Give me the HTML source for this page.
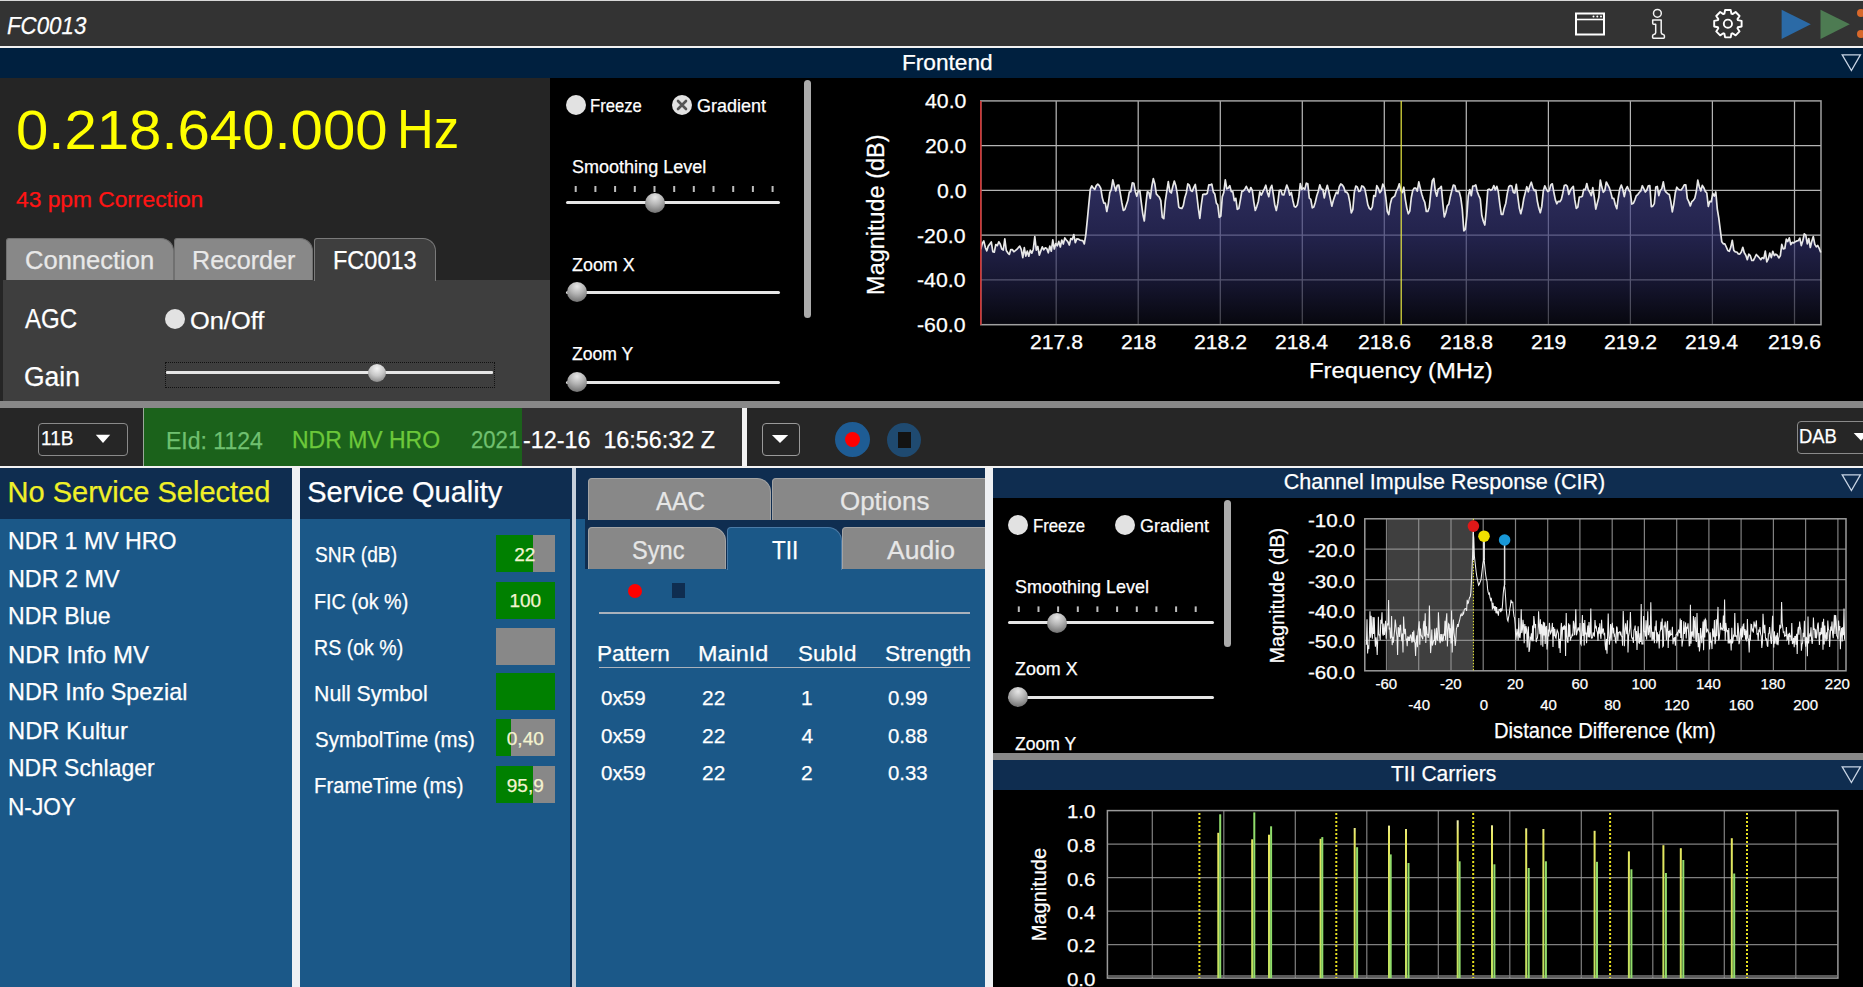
<!DOCTYPE html>
<html><head><meta charset="utf-8"><style>
html,body{margin:0;padding:0;width:1863px;height:987px;overflow:hidden;background:#262626;font-family:"Liberation Sans", sans-serif;}
div{box-sizing:border-box;}
svg{position:absolute;overflow:visible;}
.t{-webkit-text-stroke:0.25px currentColor;}
</style></head><body>
<div style="position:absolute;left:0px;top:0px;width:1863px;height:46px;background:#333333;"></div><div style="position:absolute;left:0px;top:0px;width:1863px;height:1px;background:#d8d8d8;"></div><div class="t" style="position:absolute;left:7.07px;top:13.51px;font-size:24px;line-height:24px;color:#fff;white-space:pre;font-style:italic;transform:scaleX(0.9286);transform-origin:0 0;">FC0013</div><svg style="left:0;top:0" width="1863" height="46">
<rect x="1576" y="13.5" width="28" height="21" fill="none" stroke="#fff" stroke-width="2"/>
<line x1="1576" y1="19.5" x2="1604" y2="19.5" stroke="#fff" stroke-width="1.6"/>
<circle cx="1593.5" cy="16.5" r="1" fill="#fff"/><circle cx="1597.3" cy="16.5" r="1" fill="#fff"/><circle cx="1601" cy="16.5" r="1" fill="#fff"/>
<circle cx="1657.4" cy="13.3" r="3.9" fill="none" stroke="#f4f4f4" stroke-width="1.5"/>
<path d="M1652.7 19.9 H1661.2 V32.6 Q1661.4 34.2 1663.2 34.4 Q1664.4 34.6 1664.4 35.8 V37.6 Q1664.4 38.3 1663.6 38.3 H1653.3 Q1652.6 38.3 1652.6 37.6 V35.8 Q1652.6 34.6 1653.8 34.4 Q1655.6 34.2 1655.7 32.6 V24.2 H1653.6 Q1652.7 24.2 1652.7 23.2 Z" fill="none" stroke="#f4f4f4" stroke-width="1.5" stroke-linejoin="round"/>
<path fill="none" stroke="#fff" stroke-width="1.9" stroke-linejoin="round" d="M1724.37 13.71 L1725.12 9.98 L1730.68 9.98 L1731.43 13.71 L1732.47 14.13 L1735.64 12.03 L1739.57 15.96 L1737.47 19.13 L1737.89 20.17 L1741.62 20.92 L1741.62 26.48 L1737.89 27.23 L1737.47 28.27 L1739.57 31.44 L1735.64 35.37 L1732.47 33.27 L1731.43 33.69 L1730.68 37.42 L1725.12 37.42 L1724.37 33.69 L1723.33 33.27 L1720.16 35.37 L1716.23 31.44 L1718.33 28.27 L1717.91 27.23 L1714.18 26.48 L1714.18 20.92 L1717.91 20.17 L1718.33 19.13 L1716.23 15.96 L1720.16 12.03 L1723.33 14.13 Z"/>
<circle cx="1727.9" cy="23.7" r="4.1" fill="none" stroke="#fff" stroke-width="1.9"/>
<polygon points="1781.6,9.7 1810.8,24.3 1781.6,39" fill="#2b6aa6"/>
<polygon points="1820.5,9.7 1849.8,24.3 1820.5,39" fill="#4d7b52"/>
<circle cx="1861" cy="13" r="4" fill="#d9682a"/><circle cx="1861" cy="34" r="4" fill="#d9682a"/>
</svg><div style="position:absolute;left:0px;top:46px;width:1863px;height:2px;background:#f2f2f2;"></div><div style="position:absolute;left:0px;top:48px;width:1863px;height:30px;background:#00203f;"></div><div class="t" style="position:absolute;left:901.90px;top:50.66px;font-size:22.7px;line-height:22.7px;color:#fff;white-space:pre;">Frontend</div><svg style="left:0;top:0" width="1863" height="80"><polygon points="1842.2,54.9 1860.4,54.9 1851.4,70.5" fill="none" stroke="#c8d4e4" stroke-width="1.3"/></svg><div style="position:absolute;left:0px;top:78px;width:550px;height:323px;background:#252525;"></div><div class="n" style="position:absolute;left:16.29px;top:102.51px;font-size:55px;line-height:55px;color:#ffff00;white-space:pre;transform:scaleX(1.0563);transform-origin:0 0;">0.218.640.000</div><div class="n" style="position:absolute;left:397.30px;top:101.51px;font-size:55px;line-height:55px;color:#ffff00;white-space:pre;transform:scaleX(0.9246);transform-origin:0 0;">Hz</div><div class="t" style="position:absolute;left:15.80px;top:188.66px;font-size:21.7px;line-height:21.7px;color:#ff1414;white-space:pre;transform:scaleX(1.0497);transform-origin:0 0;">43 ppm Correction</div><div style="position:absolute;left:3px;top:280px;width:547px;height:121px;background:#3e3e3e;"></div><div style="position:absolute;left:6px;top:238px;width:168px;height:42px;background:#888;border:1px solid #707070;border-bottom:none;border-radius:3px 13px 0 0;"></div><div style="position:absolute;left:174px;top:238px;width:139px;height:42px;background:#888;border:1px solid #707070;border-bottom:none;border-radius:3px 13px 0 0;"></div><div style="position:absolute;left:314px;top:238px;width:122px;height:43px;background:#3e3e3e;border:1px solid #7a7a7a;border-bottom:none;border-radius:3px 13px 0 0;"></div><div class="t" style="position:absolute;left:25.31px;top:248.16px;font-size:25.7px;line-height:25.7px;color:#e8e8e8;white-space:pre;transform:scaleX(0.9938);transform-origin:0 0;">Connection</div><div class="t" style="position:absolute;left:191.84px;top:248.16px;font-size:25.7px;line-height:25.7px;color:#e8e8e8;white-space:pre;transform:scaleX(0.9777);transform-origin:0 0;">Recorder</div><div class="t" style="position:absolute;left:332.87px;top:248.16px;font-size:25.7px;line-height:25.7px;color:#fff;white-space:pre;transform:scaleX(0.9148);transform-origin:0 0;">FC0013</div><div class="t" style="position:absolute;left:24.70px;top:304.81px;font-size:27.4px;line-height:27.4px;color:#fff;white-space:pre;transform:scaleX(0.8776);transform-origin:0 0;">AGC</div><div style="position:absolute;left:165px;top:308.5px;width:20px;height:20px;border-radius:50%;background:#e2e2e2;"></div><div class="t" style="position:absolute;left:190.37px;top:309.21px;font-size:24.6px;line-height:24.6px;color:#fff;white-space:pre;transform:scaleX(1.0324);transform-origin:0 0;">On/Off</div><div class="t" style="position:absolute;left:23.72px;top:363.51px;font-size:27px;line-height:27px;color:#fff;white-space:pre;transform:scaleX(0.9815);transform-origin:0 0;">Gain</div><div style="position:absolute;left:165px;top:362px;width:330px;height:26px;border:1.3px dotted #111;"></div><div style="position:absolute;left:166px;top:371px;width:327px;height:3px;background:#e6e6e6;border-radius:1px;"></div><div style="position:absolute;left:368px;top:363.5px;width:18px;height:18px;border-radius:50%;background:radial-gradient(circle at 50% 25%,#f4f4f4 0%,#c8c8c8 45%,#707070 100%);"></div><div style="position:absolute;left:550px;top:78px;width:270px;height:323px;background:#000;"></div><div style="position:absolute;left:565.6px;top:95.0px;width:20px;height:20px;border-radius:50%;background:#e2e2e2;"></div><div class="t" style="position:absolute;left:590.32px;top:96.01px;font-size:19px;line-height:19px;color:#fff;white-space:pre;transform:scaleX(0.8759);transform-origin:0 0;">Freeze</div><div style="position:absolute;left:672.0px;top:95.0px;width:20px;height:20px;border-radius:50%;background:#e2e2e2;"></div><svg style="left:0;top:0" width="1" height="1"><path d="M678 101 L686 109 M686 101 L678 109" stroke="#555" stroke-width="2.6" stroke-linecap="round"/></svg><div class="t" style="position:absolute;left:697.35px;top:96.01px;font-size:19px;line-height:19px;color:#fff;white-space:pre;transform:scaleX(0.9472);transform-origin:0 0;">Gradient</div><div class="t" style="position:absolute;left:572.43px;top:158.26px;font-size:18.5px;line-height:18.5px;color:#fff;white-space:pre;transform:scaleX(0.9743);transform-origin:0 0;">Smoothing Level</div><div style="position:absolute;left:566px;top:201.0px;width:214px;height:3px;background:#e6e6e6;border-radius:1.5px;"></div><svg style="left:0;top:0" width="1" height="1"><rect x="574.7" y="186" width="2" height="6" fill="#bdbdbd"/><rect x="594.4" y="186" width="2" height="6" fill="#bdbdbd"/><rect x="614.1" y="186" width="2" height="6" fill="#bdbdbd"/><rect x="633.8" y="186" width="2" height="6" fill="#bdbdbd"/><rect x="653.5" y="186" width="2" height="6" fill="#bdbdbd"/><rect x="673.2" y="186" width="2" height="6" fill="#bdbdbd"/><rect x="692.8" y="186" width="2" height="6" fill="#bdbdbd"/><rect x="712.5" y="186" width="2" height="6" fill="#bdbdbd"/><rect x="732.2" y="186" width="2" height="6" fill="#bdbdbd"/><rect x="751.9" y="186" width="2" height="6" fill="#bdbdbd"/><rect x="771.6" y="186" width="2" height="6" fill="#bdbdbd"/></svg><div style="position:absolute;left:644.5px;top:192.5px;width:20px;height:20px;border-radius:50%;background:radial-gradient(circle at 50% 22%,#e6e6e6 0%,#b4b4b4 40%,#5a5a5a 100%);"></div><div class="t" style="position:absolute;left:572.00px;top:256.26px;font-size:18.5px;line-height:18.5px;color:#fff;white-space:pre;transform:scaleX(0.9672);transform-origin:0 0;">Zoom X</div><div style="position:absolute;left:566px;top:290.8px;width:214px;height:3px;background:#e6e6e6;border-radius:1.5px;"></div><div style="position:absolute;left:566.5px;top:282.3px;width:20px;height:20px;border-radius:50%;background:radial-gradient(circle at 50% 22%,#e6e6e6 0%,#b4b4b4 40%,#5a5a5a 100%);"></div><div class="t" style="position:absolute;left:572.00px;top:345.26px;font-size:18.5px;line-height:18.5px;color:#fff;white-space:pre;transform:scaleX(0.9500);transform-origin:0 0;">Zoom Y</div><div style="position:absolute;left:566px;top:380.8px;width:214px;height:3px;background:#e6e6e6;border-radius:1.5px;"></div><div style="position:absolute;left:566.5px;top:372.3px;width:20px;height:20px;border-radius:50%;background:radial-gradient(circle at 50% 22%,#e6e6e6 0%,#b4b4b4 40%,#5a5a5a 100%);"></div><div style="position:absolute;left:804px;top:80px;width:7.3px;height:238px;background:#ababab;border-radius:4px;"></div><div style="position:absolute;left:820px;top:78px;width:1043px;height:323px;background:#000;"></div><svg style="left:0;top:0" width="1863" height="400">
<defs><linearGradient id="sg" x1="0" y1="179.2" x2="0" y2="324.7" gradientUnits="userSpaceOnUse"><stop offset="0" stop-color="#46468e"/><stop offset="0.4" stop-color="#343472"/><stop offset="0.7" stop-color="#22224a"/><stop offset="1" stop-color="#0b0b16"/></linearGradient></defs>
<line x1="1056.2" y1="100.9" x2="1056.2" y2="324.7" stroke="#b4b4b4" stroke-width="1.25"/><line x1="1138.2" y1="100.9" x2="1138.2" y2="324.7" stroke="#b4b4b4" stroke-width="1.25"/><line x1="1220.3" y1="100.9" x2="1220.3" y2="324.7" stroke="#b4b4b4" stroke-width="1.25"/><line x1="1302.3" y1="100.9" x2="1302.3" y2="324.7" stroke="#b4b4b4" stroke-width="1.25"/><line x1="1384.3" y1="100.9" x2="1384.3" y2="324.7" stroke="#b4b4b4" stroke-width="1.25"/><line x1="1466.3" y1="100.9" x2="1466.3" y2="324.7" stroke="#b4b4b4" stroke-width="1.25"/><line x1="1548.4" y1="100.9" x2="1548.4" y2="324.7" stroke="#b4b4b4" stroke-width="1.25"/><line x1="1630.4" y1="100.9" x2="1630.4" y2="324.7" stroke="#b4b4b4" stroke-width="1.25"/><line x1="1712.4" y1="100.9" x2="1712.4" y2="324.7" stroke="#b4b4b4" stroke-width="1.25"/><line x1="1794.5" y1="100.9" x2="1794.5" y2="324.7" stroke="#b4b4b4" stroke-width="1.25"/><line x1="980.8" y1="145.7" x2="1821" y2="145.7" stroke="#b4b4b4" stroke-width="1.25"/><line x1="980.8" y1="190.4" x2="1821" y2="190.4" stroke="#b4b4b4" stroke-width="1.25"/><line x1="980.8" y1="235.2" x2="1821" y2="235.2" stroke="#b4b4b4" stroke-width="1.25"/><line x1="980.8" y1="279.9" x2="1821" y2="279.9" stroke="#b4b4b4" stroke-width="1.25"/>
<polygon points="980.8,324.7 980.8,249.4 982.3,243.2 983.8,240.9 985.3,247.3 986.8,250.8 988.3,246.0 989.8,244.1 991.3,241.9 992.8,251.6 994.3,252.2 995.8,244.5 997.3,245.7 998.8,241.8 1000.3,244.3 1001.8,249.0 1003.3,250.0 1004.8,238.8 1006.3,250.5 1007.8,252.8 1009.3,254.4 1010.8,249.6 1012.3,249.6 1013.8,251.7 1015.3,250.6 1016.8,249.4 1018.3,247.7 1019.8,246.1 1021.3,249.7 1022.8,257.7 1024.3,247.6 1025.8,256.1 1027.3,251.0 1028.8,256.2 1030.3,250.2 1031.8,253.2 1033.3,249.2 1034.8,236.7 1036.3,250.1 1037.8,246.5 1039.3,255.1 1040.8,250.9 1042.3,246.9 1043.8,249.8 1045.3,247.8 1046.8,248.6 1048.3,252.8 1049.8,246.1 1051.3,251.2 1052.8,239.9 1054.3,249.0 1055.8,243.6 1057.3,245.8 1058.8,241.4 1060.3,247.0 1061.8,240.0 1063.3,244.0 1064.8,237.9 1066.3,240.0 1067.8,241.6 1069.3,245.0 1070.8,238.5 1072.3,239.5 1073.8,234.6 1075.3,242.7 1076.8,238.9 1078.3,239.1 1079.8,240.0 1081.3,240.4 1082.8,240.6 1084.3,243.9 1085.8,234.8 1087.3,220.0 1088.8,204.3 1090.3,189.3 1091.8,185.9 1093.3,188.1 1094.8,189.4 1096.3,185.6 1097.8,184.1 1099.3,185.6 1100.8,188.4 1102.3,197.8 1103.8,203.1 1105.3,203.2 1106.8,211.5 1108.3,203.8 1109.8,192.6 1111.3,189.6 1112.8,179.8 1114.3,185.8 1115.8,190.9 1117.3,185.3 1118.8,185.0 1120.3,193.4 1121.8,202.5 1123.3,210.4 1124.8,209.6 1126.3,205.1 1127.8,200.6 1129.3,192.1 1130.8,191.6 1132.3,182.8 1133.8,183.2 1135.3,191.4 1136.8,196.3 1138.3,191.1 1139.8,190.4 1141.3,202.6 1142.8,214.1 1144.3,221.0 1145.8,204.9 1147.3,191.8 1148.8,192.2 1150.3,198.5 1151.8,186.4 1153.3,178.6 1154.8,183.7 1156.3,193.9 1157.8,195.6 1159.3,197.1 1160.8,200.7 1162.3,217.3 1163.8,218.6 1165.3,201.2 1166.8,191.4 1168.3,181.6 1169.8,191.6 1171.3,193.0 1172.8,186.5 1174.3,181.1 1175.8,185.7 1177.3,194.1 1178.8,207.1 1180.3,208.2 1181.8,208.5 1183.3,205.7 1184.8,197.7 1186.3,193.0 1187.8,183.8 1189.3,185.2 1190.8,190.6 1192.3,191.4 1193.8,187.4 1195.3,184.4 1196.8,195.1 1198.3,208.0 1199.8,218.5 1201.3,204.8 1202.8,194.5 1204.3,194.1 1205.8,194.3 1207.3,193.2 1208.8,184.9 1210.3,184.9 1211.8,184.1 1213.3,191.9 1214.8,194.1 1216.3,202.9 1217.8,205.1 1219.3,217.4 1220.8,216.2 1222.3,196.6 1223.8,192.5 1225.3,179.8 1226.8,188.8 1228.3,188.0 1229.8,185.7 1231.3,191.6 1232.8,191.7 1234.3,200.7 1235.8,198.3 1237.3,209.3 1238.8,208.6 1240.3,200.4 1241.8,191.6 1243.3,190.9 1244.8,189.2 1246.3,186.3 1247.8,189.5 1249.3,192.0 1250.8,187.5 1252.3,190.3 1253.8,201.8 1255.3,210.5 1256.8,206.6 1258.3,201.5 1259.8,191.8 1261.3,195.1 1262.8,191.8 1264.3,188.9 1265.8,185.2 1267.3,192.3 1268.8,196.7 1270.3,188.3 1271.8,185.3 1273.3,194.4 1274.8,204.9 1276.3,210.5 1277.8,203.2 1279.3,190.6 1280.8,190.1 1282.3,194.7 1283.8,195.0 1285.3,190.0 1286.8,185.0 1288.3,189.0 1289.8,195.2 1291.3,192.4 1292.8,200.2 1294.3,206.5 1295.8,207.1 1297.3,205.1 1298.8,196.9 1300.3,183.6 1301.8,189.5 1303.3,188.0 1304.8,189.4 1306.3,183.2 1307.8,183.8 1309.3,198.1 1310.8,199.3 1312.3,207.8 1313.8,206.9 1315.3,202.3 1316.8,195.8 1318.3,191.2 1319.8,184.9 1321.3,189.1 1322.8,189.3 1324.3,197.9 1325.8,190.6 1327.3,185.3 1328.8,191.5 1330.3,198.7 1331.8,206.2 1333.3,200.5 1334.8,196.1 1336.3,192.2 1337.8,193.7 1339.3,186.6 1340.8,184.0 1342.3,185.0 1343.8,187.3 1345.3,191.9 1346.8,192.2 1348.3,194.5 1349.8,202.2 1351.3,213.0 1352.8,209.7 1354.3,192.4 1355.8,186.1 1357.3,186.9 1358.8,191.5 1360.3,190.9 1361.8,185.9 1363.3,186.6 1364.8,188.8 1366.3,196.1 1367.8,204.7 1369.3,208.3 1370.8,209.6 1372.3,206.9 1373.8,195.5 1375.3,196.3 1376.8,185.7 1378.3,188.3 1379.8,192.6 1381.3,190.8 1382.8,184.1 1384.3,187.2 1385.8,197.4 1387.3,211.6 1388.8,214.5 1390.3,204.0 1391.8,198.3 1393.3,197.1 1394.8,196.0 1396.3,191.2 1397.8,188.4 1399.3,183.8 1400.8,190.3 1402.3,192.6 1403.8,187.2 1405.3,199.1 1406.8,208.1 1408.3,213.8 1409.8,211.1 1411.3,197.5 1412.8,190.4 1414.3,188.0 1415.8,188.2 1417.3,191.2 1418.8,181.9 1420.3,188.3 1421.8,194.2 1423.3,199.0 1424.8,202.4 1426.3,211.5 1427.8,211.5 1429.3,207.2 1430.8,192.7 1432.3,180.7 1433.8,178.5 1435.3,191.1 1436.8,196.2 1438.3,188.9 1439.8,188.2 1441.3,186.3 1442.8,202.8 1444.3,216.9 1445.8,212.7 1447.3,205.8 1448.8,204.2 1450.3,196.7 1451.8,190.6 1453.3,185.1 1454.8,185.5 1456.3,191.2 1457.8,191.5 1459.3,192.0 1460.8,197.9 1462.3,209.4 1463.8,230.8 1465.3,229.4 1466.8,216.0 1468.3,196.0 1469.8,189.5 1471.3,195.7 1472.8,186.1 1474.3,186.0 1475.8,185.0 1477.3,191.8 1478.8,195.6 1480.3,199.0 1481.8,215.3 1483.3,221.3 1484.8,225.0 1486.3,209.6 1487.8,189.7 1489.3,189.1 1490.8,190.3 1492.3,189.3 1493.8,185.6 1495.3,189.9 1496.8,186.3 1498.3,191.7 1499.8,204.1 1501.3,214.4 1502.8,214.5 1504.3,207.9 1505.8,203.2 1507.3,193.4 1508.8,186.7 1510.3,185.5 1511.8,186.1 1513.3,192.4 1514.8,193.0 1516.3,184.3 1517.8,196.7 1519.3,208.0 1520.8,213.7 1522.3,207.6 1523.8,198.5 1525.3,192.6 1526.8,186.7 1528.3,191.8 1529.8,186.0 1531.3,182.2 1532.8,187.6 1534.3,190.6 1535.8,190.1 1537.3,201.0 1538.8,208.1 1540.3,212.7 1541.8,206.2 1543.3,191.1 1544.8,185.8 1546.3,189.1 1547.8,191.6 1549.3,190.5 1550.8,184.9 1552.3,183.8 1553.8,192.1 1555.3,199.6 1556.8,203.8 1558.3,201.3 1559.8,201.7 1561.3,199.6 1562.8,193.2 1564.3,185.6 1565.8,184.9 1567.3,186.4 1568.8,194.5 1570.3,190.4 1571.8,188.0 1573.3,186.4 1574.8,199.9 1576.3,208.4 1577.8,207.2 1579.3,197.0 1580.8,197.0 1582.3,196.2 1583.8,189.3 1585.3,189.6 1586.8,183.5 1588.3,189.9 1589.8,192.2 1591.3,195.6 1592.8,187.7 1594.3,197.4 1595.8,209.1 1597.3,203.1 1598.8,197.3 1600.3,180.0 1601.8,187.1 1603.3,192.3 1604.8,190.5 1606.3,182.0 1607.8,184.9 1609.3,187.7 1610.8,192.4 1612.3,198.5 1613.8,198.4 1615.3,204.8 1616.8,208.6 1618.3,197.5 1619.8,188.9 1621.3,185.1 1622.8,189.6 1624.3,196.6 1625.8,189.4 1627.3,186.6 1628.8,190.1 1630.3,192.0 1631.8,204.1 1633.3,203.3 1634.8,200.1 1636.3,195.7 1637.8,194.6 1639.3,192.5 1640.8,190.9 1642.3,185.7 1643.8,188.6 1645.3,192.0 1646.8,190.1 1648.3,185.8 1649.8,185.5 1651.3,206.7 1652.8,206.1 1654.3,203.6 1655.8,187.1 1657.3,186.5 1658.8,195.6 1660.3,190.5 1661.8,188.8 1663.3,181.9 1664.8,190.3 1666.3,192.4 1667.8,193.7 1669.3,194.5 1670.8,201.7 1672.3,211.8 1673.8,204.0 1675.3,192.8 1676.8,187.2 1678.3,189.2 1679.8,190.0 1681.3,189.8 1682.8,187.7 1684.3,184.8 1685.8,184.9 1687.3,198.7 1688.8,201.6 1690.3,205.9 1691.8,201.6 1693.3,200.4 1694.8,198.1 1696.3,191.5 1697.8,180.2 1699.3,186.7 1700.8,191.0 1702.3,185.4 1703.8,187.7 1705.3,191.4 1706.8,193.0 1708.3,206.5 1709.8,201.3 1711.3,201.7 1712.8,193.4 1714.3,196.0 1715.8,192.0 1717.3,209.1 1718.8,218.2 1720.3,230.1 1721.8,241.8 1723.3,243.8 1724.8,243.9 1726.3,247.0 1727.8,250.5 1729.3,251.3 1730.8,247.1 1732.3,240.3 1733.8,250.3 1735.3,251.8 1736.8,252.0 1738.3,253.9 1739.8,254.1 1741.3,252.1 1742.8,247.3 1744.3,252.8 1745.8,255.2 1747.3,259.7 1748.8,254.2 1750.3,255.7 1751.8,260.4 1753.3,260.5 1754.8,257.6 1756.3,254.5 1757.8,256.1 1759.3,257.8 1760.8,259.7 1762.3,257.6 1763.8,258.6 1765.3,251.1 1766.8,261.9 1768.3,258.9 1769.8,253.0 1771.3,257.6 1772.8,251.3 1774.3,255.5 1775.8,254.2 1777.3,255.2 1778.8,257.9 1780.3,255.8 1781.8,244.4 1783.3,249.0 1784.8,248.5 1786.3,239.1 1787.8,241.5 1789.3,237.9 1790.8,244.6 1792.3,242.4 1793.8,242.9 1795.3,241.7 1796.8,240.9 1798.3,240.7 1799.8,238.1 1801.3,245.6 1802.8,240.8 1804.3,233.8 1805.8,235.1 1807.3,243.8 1808.8,238.6 1810.3,247.5 1811.8,241.3 1813.3,236.6 1814.8,244.4 1816.3,246.8 1817.8,245.5 1819.3,248.6 1820.8,252.5 1821,324.7" fill="url(#sg)" fill-opacity="0.66"/>
<rect x="980.8" y="100.9" width="840.2" height="223.79999999999998" fill="none" stroke="#a0a0a0" stroke-width="1.5"/>
<polyline points="980.8,249.4 982.3,243.2 983.8,240.9 985.3,247.3 986.8,250.8 988.3,246.0 989.8,244.1 991.3,241.9 992.8,251.6 994.3,252.2 995.8,244.5 997.3,245.7 998.8,241.8 1000.3,244.3 1001.8,249.0 1003.3,250.0 1004.8,238.8 1006.3,250.5 1007.8,252.8 1009.3,254.4 1010.8,249.6 1012.3,249.6 1013.8,251.7 1015.3,250.6 1016.8,249.4 1018.3,247.7 1019.8,246.1 1021.3,249.7 1022.8,257.7 1024.3,247.6 1025.8,256.1 1027.3,251.0 1028.8,256.2 1030.3,250.2 1031.8,253.2 1033.3,249.2 1034.8,236.7 1036.3,250.1 1037.8,246.5 1039.3,255.1 1040.8,250.9 1042.3,246.9 1043.8,249.8 1045.3,247.8 1046.8,248.6 1048.3,252.8 1049.8,246.1 1051.3,251.2 1052.8,239.9 1054.3,249.0 1055.8,243.6 1057.3,245.8 1058.8,241.4 1060.3,247.0 1061.8,240.0 1063.3,244.0 1064.8,237.9 1066.3,240.0 1067.8,241.6 1069.3,245.0 1070.8,238.5 1072.3,239.5 1073.8,234.6 1075.3,242.7 1076.8,238.9 1078.3,239.1 1079.8,240.0 1081.3,240.4 1082.8,240.6 1084.3,243.9 1085.8,234.8 1087.3,220.0 1088.8,204.3 1090.3,189.3 1091.8,185.9 1093.3,188.1 1094.8,189.4 1096.3,185.6 1097.8,184.1 1099.3,185.6 1100.8,188.4 1102.3,197.8 1103.8,203.1 1105.3,203.2 1106.8,211.5 1108.3,203.8 1109.8,192.6 1111.3,189.6 1112.8,179.8 1114.3,185.8 1115.8,190.9 1117.3,185.3 1118.8,185.0 1120.3,193.4 1121.8,202.5 1123.3,210.4 1124.8,209.6 1126.3,205.1 1127.8,200.6 1129.3,192.1 1130.8,191.6 1132.3,182.8 1133.8,183.2 1135.3,191.4 1136.8,196.3 1138.3,191.1 1139.8,190.4 1141.3,202.6 1142.8,214.1 1144.3,221.0 1145.8,204.9 1147.3,191.8 1148.8,192.2 1150.3,198.5 1151.8,186.4 1153.3,178.6 1154.8,183.7 1156.3,193.9 1157.8,195.6 1159.3,197.1 1160.8,200.7 1162.3,217.3 1163.8,218.6 1165.3,201.2 1166.8,191.4 1168.3,181.6 1169.8,191.6 1171.3,193.0 1172.8,186.5 1174.3,181.1 1175.8,185.7 1177.3,194.1 1178.8,207.1 1180.3,208.2 1181.8,208.5 1183.3,205.7 1184.8,197.7 1186.3,193.0 1187.8,183.8 1189.3,185.2 1190.8,190.6 1192.3,191.4 1193.8,187.4 1195.3,184.4 1196.8,195.1 1198.3,208.0 1199.8,218.5 1201.3,204.8 1202.8,194.5 1204.3,194.1 1205.8,194.3 1207.3,193.2 1208.8,184.9 1210.3,184.9 1211.8,184.1 1213.3,191.9 1214.8,194.1 1216.3,202.9 1217.8,205.1 1219.3,217.4 1220.8,216.2 1222.3,196.6 1223.8,192.5 1225.3,179.8 1226.8,188.8 1228.3,188.0 1229.8,185.7 1231.3,191.6 1232.8,191.7 1234.3,200.7 1235.8,198.3 1237.3,209.3 1238.8,208.6 1240.3,200.4 1241.8,191.6 1243.3,190.9 1244.8,189.2 1246.3,186.3 1247.8,189.5 1249.3,192.0 1250.8,187.5 1252.3,190.3 1253.8,201.8 1255.3,210.5 1256.8,206.6 1258.3,201.5 1259.8,191.8 1261.3,195.1 1262.8,191.8 1264.3,188.9 1265.8,185.2 1267.3,192.3 1268.8,196.7 1270.3,188.3 1271.8,185.3 1273.3,194.4 1274.8,204.9 1276.3,210.5 1277.8,203.2 1279.3,190.6 1280.8,190.1 1282.3,194.7 1283.8,195.0 1285.3,190.0 1286.8,185.0 1288.3,189.0 1289.8,195.2 1291.3,192.4 1292.8,200.2 1294.3,206.5 1295.8,207.1 1297.3,205.1 1298.8,196.9 1300.3,183.6 1301.8,189.5 1303.3,188.0 1304.8,189.4 1306.3,183.2 1307.8,183.8 1309.3,198.1 1310.8,199.3 1312.3,207.8 1313.8,206.9 1315.3,202.3 1316.8,195.8 1318.3,191.2 1319.8,184.9 1321.3,189.1 1322.8,189.3 1324.3,197.9 1325.8,190.6 1327.3,185.3 1328.8,191.5 1330.3,198.7 1331.8,206.2 1333.3,200.5 1334.8,196.1 1336.3,192.2 1337.8,193.7 1339.3,186.6 1340.8,184.0 1342.3,185.0 1343.8,187.3 1345.3,191.9 1346.8,192.2 1348.3,194.5 1349.8,202.2 1351.3,213.0 1352.8,209.7 1354.3,192.4 1355.8,186.1 1357.3,186.9 1358.8,191.5 1360.3,190.9 1361.8,185.9 1363.3,186.6 1364.8,188.8 1366.3,196.1 1367.8,204.7 1369.3,208.3 1370.8,209.6 1372.3,206.9 1373.8,195.5 1375.3,196.3 1376.8,185.7 1378.3,188.3 1379.8,192.6 1381.3,190.8 1382.8,184.1 1384.3,187.2 1385.8,197.4 1387.3,211.6 1388.8,214.5 1390.3,204.0 1391.8,198.3 1393.3,197.1 1394.8,196.0 1396.3,191.2 1397.8,188.4 1399.3,183.8 1400.8,190.3 1402.3,192.6 1403.8,187.2 1405.3,199.1 1406.8,208.1 1408.3,213.8 1409.8,211.1 1411.3,197.5 1412.8,190.4 1414.3,188.0 1415.8,188.2 1417.3,191.2 1418.8,181.9 1420.3,188.3 1421.8,194.2 1423.3,199.0 1424.8,202.4 1426.3,211.5 1427.8,211.5 1429.3,207.2 1430.8,192.7 1432.3,180.7 1433.8,178.5 1435.3,191.1 1436.8,196.2 1438.3,188.9 1439.8,188.2 1441.3,186.3 1442.8,202.8 1444.3,216.9 1445.8,212.7 1447.3,205.8 1448.8,204.2 1450.3,196.7 1451.8,190.6 1453.3,185.1 1454.8,185.5 1456.3,191.2 1457.8,191.5 1459.3,192.0 1460.8,197.9 1462.3,209.4 1463.8,230.8 1465.3,229.4 1466.8,216.0 1468.3,196.0 1469.8,189.5 1471.3,195.7 1472.8,186.1 1474.3,186.0 1475.8,185.0 1477.3,191.8 1478.8,195.6 1480.3,199.0 1481.8,215.3 1483.3,221.3 1484.8,225.0 1486.3,209.6 1487.8,189.7 1489.3,189.1 1490.8,190.3 1492.3,189.3 1493.8,185.6 1495.3,189.9 1496.8,186.3 1498.3,191.7 1499.8,204.1 1501.3,214.4 1502.8,214.5 1504.3,207.9 1505.8,203.2 1507.3,193.4 1508.8,186.7 1510.3,185.5 1511.8,186.1 1513.3,192.4 1514.8,193.0 1516.3,184.3 1517.8,196.7 1519.3,208.0 1520.8,213.7 1522.3,207.6 1523.8,198.5 1525.3,192.6 1526.8,186.7 1528.3,191.8 1529.8,186.0 1531.3,182.2 1532.8,187.6 1534.3,190.6 1535.8,190.1 1537.3,201.0 1538.8,208.1 1540.3,212.7 1541.8,206.2 1543.3,191.1 1544.8,185.8 1546.3,189.1 1547.8,191.6 1549.3,190.5 1550.8,184.9 1552.3,183.8 1553.8,192.1 1555.3,199.6 1556.8,203.8 1558.3,201.3 1559.8,201.7 1561.3,199.6 1562.8,193.2 1564.3,185.6 1565.8,184.9 1567.3,186.4 1568.8,194.5 1570.3,190.4 1571.8,188.0 1573.3,186.4 1574.8,199.9 1576.3,208.4 1577.8,207.2 1579.3,197.0 1580.8,197.0 1582.3,196.2 1583.8,189.3 1585.3,189.6 1586.8,183.5 1588.3,189.9 1589.8,192.2 1591.3,195.6 1592.8,187.7 1594.3,197.4 1595.8,209.1 1597.3,203.1 1598.8,197.3 1600.3,180.0 1601.8,187.1 1603.3,192.3 1604.8,190.5 1606.3,182.0 1607.8,184.9 1609.3,187.7 1610.8,192.4 1612.3,198.5 1613.8,198.4 1615.3,204.8 1616.8,208.6 1618.3,197.5 1619.8,188.9 1621.3,185.1 1622.8,189.6 1624.3,196.6 1625.8,189.4 1627.3,186.6 1628.8,190.1 1630.3,192.0 1631.8,204.1 1633.3,203.3 1634.8,200.1 1636.3,195.7 1637.8,194.6 1639.3,192.5 1640.8,190.9 1642.3,185.7 1643.8,188.6 1645.3,192.0 1646.8,190.1 1648.3,185.8 1649.8,185.5 1651.3,206.7 1652.8,206.1 1654.3,203.6 1655.8,187.1 1657.3,186.5 1658.8,195.6 1660.3,190.5 1661.8,188.8 1663.3,181.9 1664.8,190.3 1666.3,192.4 1667.8,193.7 1669.3,194.5 1670.8,201.7 1672.3,211.8 1673.8,204.0 1675.3,192.8 1676.8,187.2 1678.3,189.2 1679.8,190.0 1681.3,189.8 1682.8,187.7 1684.3,184.8 1685.8,184.9 1687.3,198.7 1688.8,201.6 1690.3,205.9 1691.8,201.6 1693.3,200.4 1694.8,198.1 1696.3,191.5 1697.8,180.2 1699.3,186.7 1700.8,191.0 1702.3,185.4 1703.8,187.7 1705.3,191.4 1706.8,193.0 1708.3,206.5 1709.8,201.3 1711.3,201.7 1712.8,193.4 1714.3,196.0 1715.8,192.0 1717.3,209.1 1718.8,218.2 1720.3,230.1 1721.8,241.8 1723.3,243.8 1724.8,243.9 1726.3,247.0 1727.8,250.5 1729.3,251.3 1730.8,247.1 1732.3,240.3 1733.8,250.3 1735.3,251.8 1736.8,252.0 1738.3,253.9 1739.8,254.1 1741.3,252.1 1742.8,247.3 1744.3,252.8 1745.8,255.2 1747.3,259.7 1748.8,254.2 1750.3,255.7 1751.8,260.4 1753.3,260.5 1754.8,257.6 1756.3,254.5 1757.8,256.1 1759.3,257.8 1760.8,259.7 1762.3,257.6 1763.8,258.6 1765.3,251.1 1766.8,261.9 1768.3,258.9 1769.8,253.0 1771.3,257.6 1772.8,251.3 1774.3,255.5 1775.8,254.2 1777.3,255.2 1778.8,257.9 1780.3,255.8 1781.8,244.4 1783.3,249.0 1784.8,248.5 1786.3,239.1 1787.8,241.5 1789.3,237.9 1790.8,244.6 1792.3,242.4 1793.8,242.9 1795.3,241.7 1796.8,240.9 1798.3,240.7 1799.8,238.1 1801.3,245.6 1802.8,240.8 1804.3,233.8 1805.8,235.1 1807.3,243.8 1808.8,238.6 1810.3,247.5 1811.8,241.3 1813.3,236.6 1814.8,244.4 1816.3,246.8 1817.8,245.5 1819.3,248.6 1820.8,252.5" fill="none" stroke="#e8e8e8" stroke-width="1.7" stroke-linejoin="round"/>
<line x1="980.8" y1="100.9" x2="980.8" y2="324.7" stroke="#d03030" stroke-width="1.5"/>
<line x1="1401.2" y1="100.9" x2="1401.2" y2="324.7" stroke="#e8e840" stroke-width="1.2"/>
</svg><div class="t" style="position:absolute;left:924.87px;top:92.26px;font-size:19.5px;line-height:19.5px;color:#fff;white-space:pre;transform:scaleX(1.0900);transform-origin:0 0;">40.0</div><div class="t" style="position:absolute;left:924.87px;top:137.26px;font-size:19.5px;line-height:19.5px;color:#fff;white-space:pre;transform:scaleX(1.0900);transform-origin:0 0;">20.0</div><div class="t" style="position:absolute;left:936.86px;top:182.26px;font-size:19.5px;line-height:19.5px;color:#fff;white-space:pre;transform:scaleX(1.0900);transform-origin:0 0;">0.0</div><div class="t" style="position:absolute;left:917.24px;top:227.26px;font-size:19.5px;line-height:19.5px;color:#fff;white-space:pre;transform:scaleX(1.0900);transform-origin:0 0;">-20.0</div><div class="t" style="position:absolute;left:917.24px;top:271.26px;font-size:19.5px;line-height:19.5px;color:#fff;white-space:pre;transform:scaleX(1.0900);transform-origin:0 0;">-40.0</div><div class="t" style="position:absolute;left:917.24px;top:316.26px;font-size:19.5px;line-height:19.5px;color:#fff;white-space:pre;transform:scaleX(1.0900);transform-origin:0 0;">-60.0</div><div class="t" style="position:absolute;left:1029.70px;top:332.01px;font-size:20px;line-height:20px;color:#fff;white-space:pre;transform:scaleX(1.0600);transform-origin:0 0;">217.8</div><div class="t" style="position:absolute;left:1120.74px;top:332.01px;font-size:20px;line-height:20px;color:#fff;white-space:pre;transform:scaleX(1.0600);transform-origin:0 0;">218</div><div class="t" style="position:absolute;left:1193.76px;top:332.01px;font-size:20px;line-height:20px;color:#fff;white-space:pre;transform:scaleX(1.0600);transform-origin:0 0;">218.2</div><div class="t" style="position:absolute;left:1275.26px;top:332.01px;font-size:20px;line-height:20px;color:#fff;white-space:pre;transform:scaleX(1.0600);transform-origin:0 0;">218.4</div><div class="t" style="position:absolute;left:1357.82px;top:332.01px;font-size:20px;line-height:20px;color:#fff;white-space:pre;transform:scaleX(1.0600);transform-origin:0 0;">218.6</div><div class="t" style="position:absolute;left:1439.85px;top:332.01px;font-size:20px;line-height:20px;color:#fff;white-space:pre;transform:scaleX(1.0600);transform-origin:0 0;">218.8</div><div class="t" style="position:absolute;left:1530.89px;top:332.01px;font-size:20px;line-height:20px;color:#fff;white-space:pre;transform:scaleX(1.0600);transform-origin:0 0;">219</div><div class="t" style="position:absolute;left:1603.91px;top:332.01px;font-size:20px;line-height:20px;color:#fff;white-space:pre;transform:scaleX(1.0600);transform-origin:0 0;">219.2</div><div class="t" style="position:absolute;left:1685.41px;top:332.01px;font-size:20px;line-height:20px;color:#fff;white-space:pre;transform:scaleX(1.0600);transform-origin:0 0;">219.4</div><div class="t" style="position:absolute;left:1767.97px;top:332.01px;font-size:20px;line-height:20px;color:#fff;white-space:pre;transform:scaleX(1.0600);transform-origin:0 0;">219.6</div><div class="t" style="position:absolute;left:1309.28px;top:360.26px;font-size:22.5px;line-height:22.5px;color:#fff;white-space:pre;transform:scaleX(1.0576);transform-origin:0 0;">Frequency (MHz)</div><div class="t" style="position:absolute;left:796.80px;top:202.56px;font-size:23px;line-height:23px;color:#fff;white-space:pre;transform-origin:79.00px 11.34px;transform:rotate(-90deg) scaleX(1.0195);">Magnitude (dB)</div><div style="position:absolute;left:0px;top:401px;width:1863px;height:7px;background:#888;"></div><div style="position:absolute;left:0px;top:408px;width:1863px;height:58px;background:#262626;"></div><div style="position:absolute;left:38px;top:423px;width:90px;height:33px;border:1px solid #8a8a8a;border-radius:4px;"></div><div class="t" style="position:absolute;left:41.33px;top:429.21px;font-size:19.6px;line-height:19.6px;color:#fff;white-space:pre;transform:scaleX(0.9677);transform-origin:0 0;">11B</div><svg style="left:0;top:0" width="1" height="1"><polygon points="95.8,434.8 110.2,434.8 103,442.9" fill="#fff"/></svg><div style="position:absolute;left:143px;top:408px;width:1px;height:58px;background:#9aa89a;"></div><div style="position:absolute;left:144px;top:408px;width:378px;height:58px;background:#1b621b;"></div><div style="position:absolute;left:522px;top:408px;width:221px;height:58px;background:#303030;"></div><div style="position:absolute;left:742px;top:408px;width:5px;height:58px;background:#f2f2f2;"></div><div class="t" style="position:absolute;left:165.64px;top:429.11px;font-size:24.8px;line-height:24.8px;color:#70c070;white-space:pre;transform:scaleX(0.9284);transform-origin:0 0;">EId: 1124</div><div class="t" style="position:absolute;left:292.15px;top:429.26px;font-size:23.5px;line-height:23.5px;color:#6cc83a;white-space:pre;transform:scaleX(0.9772);transform-origin:0 0;">NDR MV HRO</div><div class="t" style="position:absolute;left:470.98px;top:427.51px;font-size:24px;line-height:24px;color:#70c070;white-space:pre;transform:scaleX(0.9216);transform-origin:0 0;">2021</div><div class="t" style="position:absolute;left:523.13px;top:427.51px;font-size:24px;line-height:24px;color:#fff;white-space:pre;transform:scaleX(0.9719);transform-origin:0 0;">-12-16  16:56:32 Z</div><div style="position:absolute;left:762px;top:423px;width:38px;height:33px;border:1px solid #9a9a9a;border-radius:4px;"></div><svg style="left:0;top:0" width="1" height="1"><polygon points="771.9,435 788.2,435 780,443.1" fill="#fff"/></svg><div style="position:absolute;left:834.7px;top:422.3px;width:35px;height:35px;border-radius:50%;background:#1e5c94;"></div><div style="position:absolute;left:844.6px;top:432px;width:15px;height:15px;border-radius:50%;background:#ff0000;"></div><div style="position:absolute;left:887.3px;top:422.5px;width:34px;height:34px;border-radius:50%;background:#1f4a70;"></div><div style="position:absolute;left:898px;top:432.4px;width:13px;height:15.3px;background:#131313;"></div><div style="position:absolute;left:1797px;top:421px;width:70px;height:32.5px;border:1px solid #8a8a8a;border-radius:4px;"></div><div class="t" style="position:absolute;left:1799.05px;top:427.31px;font-size:19.4px;line-height:19.4px;color:#fff;white-space:pre;transform:scaleX(0.9474);transform-origin:0 0;">DAB</div><svg style="left:0;top:0" width="1" height="1"><polygon points="1853.7,433 1868,433 1861,440.8" fill="#fff"/></svg><div style="position:absolute;left:0px;top:466px;width:1863px;height:2px;background:#f2f2f2;"></div><div style="position:absolute;left:0px;top:468px;width:292px;height:51px;background:#0f2d50;"></div><div style="position:absolute;left:0px;top:519px;width:292px;height:468px;background:#1b5888;"></div><div style="position:absolute;left:292px;top:468px;width:8px;height:519px;background:#eef0f3;"></div><div class="t" style="position:absolute;left:7.60px;top:477.51px;font-size:29px;line-height:29px;color:#f0f028;white-space:pre;">No Service Selected</div><div class="t" style="position:absolute;left:8.14px;top:530.21px;font-size:23.6px;line-height:23.6px;color:#fff;white-space:pre;transform:scaleX(0.9817);transform-origin:0 0;">NDR 1 MV HRO</div><div class="t" style="position:absolute;left:8.12px;top:568.21px;font-size:23.6px;line-height:23.6px;color:#fff;white-space:pre;transform:scaleX(0.9901);transform-origin:0 0;">NDR 2 MV</div><div class="t" style="position:absolute;left:8.15px;top:605.21px;font-size:23.6px;line-height:23.6px;color:#fff;white-space:pre;transform:scaleX(0.9775);transform-origin:0 0;">NDR Blue</div><div class="t" style="position:absolute;left:8.07px;top:644.21px;font-size:23.6px;line-height:23.6px;color:#fff;white-space:pre;transform:scaleX(1.0139);transform-origin:0 0;">NDR Info MV</div><div class="t" style="position:absolute;left:8.12px;top:681.21px;font-size:23.6px;line-height:23.6px;color:#fff;white-space:pre;transform:scaleX(0.9910);transform-origin:0 0;">NDR Info Spezial</div><div class="t" style="position:absolute;left:8.09px;top:720.21px;font-size:23.6px;line-height:23.6px;color:#fff;white-space:pre;transform:scaleX(1.0051);transform-origin:0 0;">NDR Kultur</div><div class="t" style="position:absolute;left:8.16px;top:757.21px;font-size:23.6px;line-height:23.6px;color:#fff;white-space:pre;transform:scaleX(0.9725);transform-origin:0 0;">NDR Schlager</div><div class="t" style="position:absolute;left:8.18px;top:796.21px;font-size:23.6px;line-height:23.6px;color:#fff;white-space:pre;transform:scaleX(0.9603);transform-origin:0 0;">N-JOY</div><div style="position:absolute;left:300px;top:468px;width:270px;height:51px;background:#0f2d50;"></div><div style="position:absolute;left:300px;top:519px;width:270px;height:468px;background:#1b5888;"></div><div style="position:absolute;left:570px;top:468px;width:2px;height:519px;background:#0f2d50;"></div><div style="position:absolute;left:572px;top:468px;width:4px;height:519px;background:#c5cfdb;"></div><div class="t" style="position:absolute;left:307.20px;top:477.51px;font-size:29px;line-height:29px;color:#fff;white-space:pre;">Service Quality</div><div class="t" style="position:absolute;left:315.13px;top:543.51px;font-size:22px;line-height:22px;color:#fff;white-space:pre;transform:scaleX(0.8717);transform-origin:0 0;">SNR (dB)</div><div style="position:absolute;left:495.5px;top:534.5px;width:59.3px;height:37px;background:#888888;"></div><div style="position:absolute;left:495.5px;top:534.5px;width:37.799999999999955px;height:37px;background:#008000;"></div><div class="t" style="position:absolute;left:314.21px;top:590.51px;font-size:22px;line-height:22px;color:#fff;white-space:pre;transform:scaleX(0.8961);transform-origin:0 0;">FIC (ok %)</div><div style="position:absolute;left:495.5px;top:581.6px;width:59.3px;height:37px;background:#888888;"></div><div style="position:absolute;left:495.5px;top:581.6px;width:59.5px;height:37px;background:#008000;"></div><div class="t" style="position:absolute;left:314.22px;top:636.51px;font-size:22px;line-height:22px;color:#fff;white-space:pre;transform:scaleX(0.8897);transform-origin:0 0;">RS (ok %)</div><div style="position:absolute;left:495.5px;top:627.6px;width:59.3px;height:37px;background:#888888;"></div><div class="t" style="position:absolute;left:314.06px;top:682.51px;font-size:22px;line-height:22px;color:#fff;white-space:pre;transform:scaleX(0.9684);transform-origin:0 0;">Null Symbol</div><div style="position:absolute;left:495.5px;top:673.3px;width:59.3px;height:37px;background:#888888;"></div><div style="position:absolute;left:495.5px;top:673.3px;width:59.5px;height:37px;background:#008000;"></div><div class="t" style="position:absolute;left:315.07px;top:728.51px;font-size:22px;line-height:22px;color:#fff;white-space:pre;transform:scaleX(0.9314);transform-origin:0 0;">SymbolTime (ms)</div><div style="position:absolute;left:495.5px;top:719.2px;width:59.3px;height:37px;background:#888888;"></div><div style="position:absolute;left:495.5px;top:719.2px;width:15.5px;height:37px;background:#008000;"></div><div class="t" style="position:absolute;left:314.15px;top:774.51px;font-size:22px;line-height:22px;color:#fff;white-space:pre;transform:scaleX(0.9241);transform-origin:0 0;">FrameTime (ms)</div><div style="position:absolute;left:495.5px;top:765.7px;width:59.3px;height:37px;background:#888888;"></div><div style="position:absolute;left:495.5px;top:765.7px;width:37.5px;height:37px;background:#008000;"></div><div class="t" style="position:absolute;left:514.30px;top:545.01px;font-size:19px;line-height:19px;color:#f4f4d0;white-space:pre;">22</div><div class="t" style="position:absolute;left:509.40px;top:591.01px;font-size:19px;line-height:19px;color:#f4f4d0;white-space:pre;">100</div><div class="t" style="position:absolute;left:506.80px;top:729.01px;font-size:19px;line-height:19px;color:#f4f4d0;white-space:pre;">0,40</div><div class="t" style="position:absolute;left:506.80px;top:776.01px;font-size:19px;line-height:19px;color:#f4f4d0;white-space:pre;">95,9</div><div style="position:absolute;left:576px;top:468px;width:409px;height:519px;background:#1b5888;"></div><div style="position:absolute;left:576px;top:468px;width:409px;height:51px;background:#0f2d50;"></div><div style="position:absolute;left:585px;top:519px;width:400px;height:50px;background:#0f2d50;"></div><div style="position:absolute;left:588.3px;top:478px;width:183px;height:42px;background:#888;border:1px solid #a4a4a4;border-bottom:none;border-radius:4px 14px 0 0;"></div><div style="position:absolute;left:771.6px;top:478px;width:230px;height:42px;background:#888;border:1px solid #a4a4a4;border-bottom:none;border-radius:4px 14px 0 0;"></div><div style="position:absolute;left:588.3px;top:527.3px;width:138px;height:42px;background:#888;border:1px solid #a4a4a4;border-bottom:none;border-radius:4px 14px 0 0;"></div><div style="position:absolute;left:842.4px;top:527.3px;width:160px;height:42px;background:#888;border:1px solid #a4a4a4;border-bottom:none;border-radius:4px 14px 0 0;"></div><div style="position:absolute;left:727px;top:527.3px;width:115px;height:43px;background:#1b5888;border:1px solid #4a7aa6;border-bottom:none;border-radius:4px 14px 0 0;"></div><div class="t" style="position:absolute;left:656.40px;top:489.16px;font-size:25.7px;line-height:25.7px;color:#e6e6e6;white-space:pre;transform:scaleX(0.9294);transform-origin:0 0;">AAC</div><div class="t" style="position:absolute;left:839.89px;top:489.16px;font-size:25.7px;line-height:25.7px;color:#e6e6e6;white-space:pre;transform:scaleX(1.0092);transform-origin:0 0;">Options</div><div class="t" style="position:absolute;left:632.08px;top:538.16px;font-size:25.7px;line-height:25.7px;color:#e6e6e6;white-space:pre;transform:scaleX(0.9182);transform-origin:0 0;">Sync</div><div class="t" style="position:absolute;left:772.40px;top:538.16px;font-size:25.7px;line-height:25.7px;color:#fff;white-space:pre;transform:scaleX(0.8786);transform-origin:0 0;">TII</div><div class="t" style="position:absolute;left:887.10px;top:538.16px;font-size:25.7px;line-height:25.7px;color:#e6e6e6;white-space:pre;transform:scaleX(1.0344);transform-origin:0 0;">Audio</div><div style="position:absolute;left:628.3px;top:583.5px;width:14px;height:14px;border-radius:50%;background:#ff0000;"></div><div style="position:absolute;left:671.8px;top:582.7px;width:13.5px;height:15.4px;background:#0f2d50;"></div><div style="position:absolute;left:598.8px;top:611.5px;width:371.5px;height:2px;background:#aab2bc;"></div><div class="t" style="position:absolute;left:597.35px;top:642.51px;font-size:22px;line-height:22px;color:#fff;white-space:pre;transform:scaleX(1.0250);transform-origin:0 0;">Pattern</div><div class="t" style="position:absolute;left:698.37px;top:642.51px;font-size:22px;line-height:22px;color:#fff;white-space:pre;transform:scaleX(1.0635);transform-origin:0 0;">MainId</div><div class="t" style="position:absolute;left:798.09px;top:642.51px;font-size:22px;line-height:22px;color:#fff;white-space:pre;transform:scaleX(1.0145);transform-origin:0 0;">SubId</div><div class="t" style="position:absolute;left:885.17px;top:642.51px;font-size:22px;line-height:22px;color:#fff;white-space:pre;transform:scaleX(1.0346);transform-origin:0 0;">Strength</div><div style="position:absolute;left:599.4px;top:666.6px;width:370.6px;height:1.6px;background:#aab2bc;"></div><div class="t" style="position:absolute;left:600.72px;top:687.01px;font-size:21px;line-height:21px;color:#fff;white-space:pre;transform:scaleX(0.9795);transform-origin:0 0;">0x59</div><div class="t" style="position:absolute;left:701.60px;top:687.01px;font-size:21px;line-height:21px;color:#fff;white-space:pre;transform:scaleX(0.9955);transform-origin:0 0;">22</div><div class="t" style="position:absolute;left:801.00px;top:687.01px;font-size:21px;line-height:21px;color:#fff;white-space:pre;">1</div><div class="t" style="position:absolute;left:887.93px;top:687.01px;font-size:21px;line-height:21px;color:#fff;white-space:pre;transform:scaleX(0.9692);transform-origin:0 0;">0.99</div><div class="t" style="position:absolute;left:600.72px;top:725.01px;font-size:21px;line-height:21px;color:#fff;white-space:pre;transform:scaleX(0.9795);transform-origin:0 0;">0x59</div><div class="t" style="position:absolute;left:701.60px;top:725.01px;font-size:21px;line-height:21px;color:#fff;white-space:pre;transform:scaleX(0.9955);transform-origin:0 0;">22</div><div class="t" style="position:absolute;left:801.50px;top:725.01px;font-size:21px;line-height:21px;color:#fff;white-space:pre;">4</div><div class="t" style="position:absolute;left:887.93px;top:725.01px;font-size:21px;line-height:21px;color:#fff;white-space:pre;transform:scaleX(0.9692);transform-origin:0 0;">0.88</div><div class="t" style="position:absolute;left:600.72px;top:762.01px;font-size:21px;line-height:21px;color:#fff;white-space:pre;transform:scaleX(0.9795);transform-origin:0 0;">0x59</div><div class="t" style="position:absolute;left:701.60px;top:762.01px;font-size:21px;line-height:21px;color:#fff;white-space:pre;transform:scaleX(0.9955);transform-origin:0 0;">22</div><div class="t" style="position:absolute;left:801.00px;top:762.01px;font-size:21px;line-height:21px;color:#fff;white-space:pre;">2</div><div class="t" style="position:absolute;left:887.93px;top:762.01px;font-size:21px;line-height:21px;color:#fff;white-space:pre;transform:scaleX(0.9692);transform-origin:0 0;">0.33</div><div style="position:absolute;left:985px;top:468px;width:8px;height:519px;background:#eef0f3;"></div><div style="position:absolute;left:993px;top:468px;width:870px;height:30px;background:#0f2d50;"></div><div class="t" style="position:absolute;left:1283.70px;top:472.26px;font-size:21.5px;line-height:21.5px;color:#fff;white-space:pre;">Channel Impulse Response (CIR)</div><svg style="left:0;top:0" width="1" height="1"><polygon points="1842.2,474.9 1860.4,474.9 1851.4,490.5" fill="none" stroke="#c8d4e4" stroke-width="1.3"/></svg><div style="position:absolute;left:993px;top:498px;width:870px;height:255px;background:#000;"></div><div style="position:absolute;left:1008.0px;top:514.9px;width:20px;height:20px;border-radius:50%;background:#e2e2e2;"></div><div class="t" style="position:absolute;left:1033.09px;top:517.26px;font-size:18.5px;line-height:18.5px;color:#fff;white-space:pre;transform:scaleX(0.9054);transform-origin:0 0;">Freeze</div><div style="position:absolute;left:1114.5px;top:514.9px;width:20px;height:20px;border-radius:50%;background:#e2e2e2;"></div><div class="t" style="position:absolute;left:1139.83px;top:517.26px;font-size:18.5px;line-height:18.5px;color:#fff;white-space:pre;transform:scaleX(0.9729);transform-origin:0 0;">Gradient</div><div class="t" style="position:absolute;left:1015.03px;top:578.26px;font-size:18.5px;line-height:18.5px;color:#fff;white-space:pre;transform:scaleX(0.9721);transform-origin:0 0;">Smoothing Level</div><div style="position:absolute;left:1008px;top:621.0px;width:206.20000000000005px;height:3px;background:#e6e6e6;border-radius:1.5px;"></div><svg style="left:0;top:0" width="1" height="1"><rect x="1017.8" y="606.4" width="2" height="5.600000000000023" fill="#bdbdbd"/><rect x="1037.5" y="606.4" width="2" height="5.600000000000023" fill="#bdbdbd"/><rect x="1057.1" y="606.4" width="2" height="5.600000000000023" fill="#bdbdbd"/><rect x="1076.8" y="606.4" width="2" height="5.600000000000023" fill="#bdbdbd"/><rect x="1096.4" y="606.4" width="2" height="5.600000000000023" fill="#bdbdbd"/><rect x="1116.1" y="606.4" width="2" height="5.600000000000023" fill="#bdbdbd"/><rect x="1135.8" y="606.4" width="2" height="5.600000000000023" fill="#bdbdbd"/><rect x="1155.4" y="606.4" width="2" height="5.600000000000023" fill="#bdbdbd"/><rect x="1175.1" y="606.4" width="2" height="5.600000000000023" fill="#bdbdbd"/><rect x="1194.7" y="606.4" width="2" height="5.600000000000023" fill="#bdbdbd"/></svg><div style="position:absolute;left:1047.4px;top:612.5px;width:20px;height:20px;border-radius:50%;background:radial-gradient(circle at 50% 22%,#e6e6e6 0%,#b4b4b4 40%,#5a5a5a 100%);"></div><div class="t" style="position:absolute;left:1015.40px;top:660.26px;font-size:18.5px;line-height:18.5px;color:#fff;white-space:pre;transform:scaleX(0.9672);transform-origin:0 0;">Zoom X</div><div style="position:absolute;left:1008px;top:695.7px;width:206px;height:3px;background:#e6e6e6;border-radius:1.5px;"></div><div style="position:absolute;left:1008.4px;top:687.2px;width:20px;height:20px;border-radius:50%;background:radial-gradient(circle at 50% 22%,#e6e6e6 0%,#b4b4b4 40%,#5a5a5a 100%);"></div><div class="t" style="position:absolute;left:1015.40px;top:735.26px;font-size:18.5px;line-height:18.5px;color:#fff;white-space:pre;transform:scaleX(0.9500);transform-origin:0 0;">Zoom Y</div><div style="position:absolute;left:1223.7px;top:500px;width:7.5px;height:147px;background:#ababab;border-radius:4px;"></div><svg style="left:0;top:0" width="1" height="1">
<rect x="1387.3" y="518.8" width="86.1" height="152.0" fill="#3f3f3f"/>
<line x1="1386.5" y1="518.8" x2="1386.5" y2="670.8" stroke="#a0a0a0" stroke-opacity="0.8" stroke-width="1.2"/><line x1="1418.7" y1="518.8" x2="1418.7" y2="670.8" stroke="#a0a0a0" stroke-opacity="0.8" stroke-width="1.2"/><line x1="1451.0" y1="518.8" x2="1451.0" y2="670.8" stroke="#a0a0a0" stroke-opacity="0.8" stroke-width="1.2"/><line x1="1483.2" y1="518.8" x2="1483.2" y2="670.8" stroke="#a0a0a0" stroke-opacity="0.8" stroke-width="1.2"/><line x1="1515.5" y1="518.8" x2="1515.5" y2="670.8" stroke="#a0a0a0" stroke-opacity="0.8" stroke-width="1.2"/><line x1="1547.7" y1="518.8" x2="1547.7" y2="670.8" stroke="#a0a0a0" stroke-opacity="0.8" stroke-width="1.2"/><line x1="1579.9" y1="518.8" x2="1579.9" y2="670.8" stroke="#a0a0a0" stroke-opacity="0.8" stroke-width="1.2"/><line x1="1612.2" y1="518.8" x2="1612.2" y2="670.8" stroke="#a0a0a0" stroke-opacity="0.8" stroke-width="1.2"/><line x1="1644.4" y1="518.8" x2="1644.4" y2="670.8" stroke="#a0a0a0" stroke-opacity="0.8" stroke-width="1.2"/><line x1="1676.7" y1="518.8" x2="1676.7" y2="670.8" stroke="#a0a0a0" stroke-opacity="0.8" stroke-width="1.2"/><line x1="1708.9" y1="518.8" x2="1708.9" y2="670.8" stroke="#a0a0a0" stroke-opacity="0.8" stroke-width="1.2"/><line x1="1741.1" y1="518.8" x2="1741.1" y2="670.8" stroke="#a0a0a0" stroke-opacity="0.8" stroke-width="1.2"/><line x1="1773.4" y1="518.8" x2="1773.4" y2="670.8" stroke="#a0a0a0" stroke-opacity="0.8" stroke-width="1.2"/><line x1="1805.6" y1="518.8" x2="1805.6" y2="670.8" stroke="#a0a0a0" stroke-opacity="0.8" stroke-width="1.2"/><line x1="1837.9" y1="518.8" x2="1837.9" y2="670.8" stroke="#a0a0a0" stroke-opacity="0.8" stroke-width="1.2"/><line x1="1364.8" y1="549.2" x2="1846" y2="549.2" stroke="#a0a0a0" stroke-opacity="0.8" stroke-width="1.2"/><line x1="1364.8" y1="579.6" x2="1846" y2="579.6" stroke="#a0a0a0" stroke-opacity="0.8" stroke-width="1.2"/><line x1="1364.8" y1="610.0" x2="1846" y2="610.0" stroke="#a0a0a0" stroke-opacity="0.8" stroke-width="1.2"/><line x1="1364.8" y1="640.4" x2="1846" y2="640.4" stroke="#a0a0a0" stroke-opacity="0.8" stroke-width="1.2"/>
<rect x="1364.8" y="518.8" width="481.20000000000005" height="152.0" fill="none" stroke="#9a9a9a" stroke-width="1.5"/>
<line x1="1473.4" y1="518.8" x2="1473.4" y2="670.8" stroke="#f0f040" stroke-width="1" stroke-dasharray="1.5,1.5"/>
<polyline points="1365.8,644.4 1366.4,644.1 1367.0,619.3 1367.6,653.5 1368.2,645.2 1368.8,649.1 1369.4,634.1 1370.0,611.2 1370.6,637.8 1371.2,615.7 1371.8,633.0 1372.4,638.8 1373.0,617.1 1373.6,634.1 1374.2,617.2 1374.8,636.2 1375.4,646.7 1376.0,637.4 1376.6,642.4 1377.2,655.0 1377.8,637.6 1378.4,616.7 1379.0,634.9 1379.6,634.7 1380.2,640.1 1380.8,619.7 1381.4,623.6 1382.0,612.2 1382.6,633.4 1383.2,635.7 1383.8,623.5 1384.4,634.9 1385.0,629.6 1385.6,620.8 1386.2,638.8 1386.8,627.7 1387.4,623.3 1388.0,625.4 1388.6,600.0 1389.2,629.6 1389.8,627.6 1390.4,638.1 1391.0,637.2 1391.6,616.1 1392.2,645.1 1392.8,636.9 1393.4,642.8 1394.0,636.1 1394.6,630.0 1395.2,619.6 1395.8,624.6 1396.4,632.3 1397.0,636.7 1397.6,655.0 1398.2,627.2 1398.8,628.7 1399.4,636.9 1400.0,625.3 1400.6,625.1 1401.2,635.7 1401.8,641.3 1402.4,633.4 1403.0,652.5 1403.6,616.6 1404.2,628.8 1404.8,634.3 1405.4,628.9 1406.0,640.3 1406.6,638.6 1407.2,646.1 1407.8,636.3 1408.4,641.0 1409.0,636.9 1409.6,640.9 1410.2,635.5 1410.8,635.0 1411.4,638.8 1412.0,642.7 1412.6,632.0 1413.2,641.8 1413.8,630.6 1414.4,641.3 1415.0,643.1 1415.6,655.9 1416.2,639.4 1416.8,635.3 1417.4,647.2 1418.0,632.5 1418.6,627.3 1419.2,621.3 1419.8,644.8 1420.4,628.6 1421.0,634.7 1421.6,636.3 1422.2,637.8 1422.8,639.2 1423.4,625.0 1424.0,620.7 1424.6,636.5 1425.2,613.2 1425.8,642.9 1426.4,626.3 1427.0,634.1 1427.6,634.5 1428.2,637.9 1428.8,632.1 1429.4,605.5 1430.0,631.7 1430.6,653.1 1431.2,644.8 1431.8,629.6 1432.4,645.6 1433.0,643.4 1433.6,640.5 1434.2,640.5 1434.8,628.6 1435.4,645.1 1436.0,639.0 1436.6,627.9 1437.2,639.5 1437.8,640.2 1438.4,612.3 1439.0,624.5 1439.6,640.2 1440.2,643.1 1440.8,634.1 1441.4,641.3 1442.0,634.0 1442.6,641.0 1443.2,640.7 1443.8,633.7 1444.4,635.5 1445.0,620.7 1445.6,640.2 1446.2,619.9 1446.8,613.2 1447.4,646.4 1448.0,632.4 1448.6,623.7 1449.2,624.6 1449.8,638.0 1450.4,628.2 1451.0,643.4 1451.6,610.6 1452.2,652.6 1452.8,629.1 1453.4,619.6 1454.0,633.0 1454.6,637.4 1455.2,645.9 1455.8,640.7 1456.4,628.7 1457.0,627.1 1457.6,624.0 1458.2,626.8 1458.8,623.2 1459.4,621.0 1460.0,618.3 1460.6,615.1 1461.2,613.9 1461.8,615.8 1462.4,615.5 1463.0,612.6 1463.6,613.7 1464.2,609.9 1464.8,608.9 1465.4,608.6 1466.0,608.9 1466.6,610.9 1467.2,599.8 1467.8,603.4 1468.4,602.9 1469.0,599.6 1469.6,597.3 1470.2,596.9 1470.8,593.2 1471.4,581.6 1472.0,568.6 1472.6,555.3 1473.2,532.0 1473.8,538.1 1474.4,556.2 1475.0,561.6 1475.6,567.0 1476.2,572.3 1476.8,576.5 1477.4,579.4 1478.0,582.3 1478.6,585.2 1479.2,584.4 1479.8,582.8 1480.4,581.2 1481.0,579.6 1481.6,574.5 1482.2,569.5 1482.8,564.4 1483.4,561.4 1484.0,558.3 1484.6,564.4 1485.2,570.5 1485.8,575.5 1486.4,579.3 1487.0,581.3 1487.6,588.9 1488.2,592.3 1488.8,594.1 1489.4,593.2 1490.0,597.7 1490.6,600.0 1491.2,597.9 1491.8,601.6 1492.4,609.5 1493.0,602.9 1493.6,608.5 1494.2,606.0 1494.8,610.6 1495.4,606.4 1496.0,613.3 1496.6,607.0 1497.2,612.8 1497.8,612.1 1498.4,615.7 1499.0,609.6 1499.6,610.0 1500.2,609.1 1500.8,612.1 1501.4,608.7 1502.0,610.8 1502.6,603.6 1503.2,594.0 1503.8,587.8 1504.4,585.1 1505.0,589.6 1505.6,597.8 1506.2,608.6 1506.8,614.9 1507.4,619.8 1508.0,621.1 1508.6,617.0 1509.2,614.7 1509.8,609.0 1510.4,605.8 1511.0,599.9 1511.6,602.5 1512.2,602.0 1512.8,602.2 1513.4,611.3 1514.0,616.4 1514.6,618.0 1515.2,624.7 1515.8,640.1 1516.4,635.3 1517.0,628.7 1517.6,634.3 1518.2,640.6 1518.8,618.1 1519.4,636.1 1520.0,638.2 1520.6,631.6 1521.2,609.2 1521.8,633.1 1522.4,629.6 1523.0,619.9 1523.6,626.6 1524.2,643.3 1524.8,624.1 1525.4,633.7 1526.0,626.2 1526.6,629.5 1527.2,647.4 1527.8,632.3 1528.4,626.6 1529.0,652.0 1529.6,649.2 1530.2,637.8 1530.8,638.8 1531.4,633.2 1532.0,641.2 1532.6,625.5 1533.2,641.2 1533.8,616.0 1534.4,621.5 1535.0,628.1 1535.6,624.0 1536.2,642.1 1536.8,638.8 1537.4,638.1 1538.0,632.7 1538.6,611.3 1539.2,625.9 1539.8,634.2 1540.4,619.2 1541.0,645.3 1541.6,624.2 1542.2,626.1 1542.8,646.8 1543.4,621.7 1544.0,635.6 1544.6,622.5 1545.2,644.1 1545.8,627.4 1546.4,625.9 1547.0,649.6 1547.6,643.6 1548.2,629.6 1548.8,636.5 1549.4,622.9 1550.0,630.2 1550.6,633.5 1551.2,632.1 1551.8,629.3 1552.4,622.9 1553.0,647.1 1553.6,627.1 1554.2,636.3 1554.8,628.8 1555.4,637.0 1556.0,638.2 1556.6,633.7 1557.2,630.2 1557.8,631.6 1558.4,633.6 1559.0,648.2 1559.6,638.8 1560.2,653.1 1560.8,630.4 1561.4,622.9 1562.0,641.0 1562.6,627.6 1563.2,626.8 1563.8,630.0 1564.4,625.8 1565.0,626.6 1565.6,656.1 1566.2,613.0 1566.8,635.6 1567.4,641.3 1568.0,642.8 1568.6,623.3 1569.2,636.8 1569.8,624.6 1570.4,640.7 1571.0,637.6 1571.6,637.0 1572.2,634.7 1572.8,636.0 1573.4,620.8 1574.0,623.7 1574.6,635.3 1575.2,627.6 1575.8,609.2 1576.4,635.3 1577.0,633.1 1577.6,629.5 1578.2,627.4 1578.8,630.0 1579.4,630.9 1580.0,623.1 1580.6,643.7 1581.2,644.8 1581.8,629.8 1582.4,615.0 1583.0,636.1 1583.6,623.1 1584.2,645.6 1584.8,620.0 1585.4,634.4 1586.0,632.6 1586.6,643.1 1587.2,632.5 1587.8,625.6 1588.4,637.2 1589.0,622.0 1589.6,637.5 1590.2,633.4 1590.8,608.4 1591.4,638.0 1592.0,638.1 1592.6,637.0 1593.2,632.3 1593.8,635.1 1594.4,635.8 1595.0,620.1 1595.6,628.4 1596.2,625.9 1596.8,630.8 1597.4,632.1 1598.0,640.9 1598.6,627.2 1599.2,633.7 1599.8,623.3 1600.4,634.9 1601.0,638.8 1601.6,619.7 1602.2,633.6 1602.8,629.2 1603.4,629.0 1604.0,635.3 1604.6,632.9 1605.2,645.2 1605.8,650.3 1606.4,638.9 1607.0,653.8 1607.6,636.0 1608.2,613.5 1608.8,635.2 1609.4,644.7 1610.0,637.6 1610.6,624.0 1611.2,640.2 1611.8,626.3 1612.4,622.9 1613.0,633.5 1613.6,627.8 1614.2,635.7 1614.8,634.7 1615.4,640.9 1616.0,643.5 1616.6,626.6 1617.2,627.8 1617.8,640.7 1618.4,632.5 1619.0,632.2 1619.6,631.8 1620.2,634.2 1620.8,632.6 1621.4,636.1 1622.0,636.4 1622.6,645.8 1623.2,610.9 1623.8,625.5 1624.4,646.3 1625.0,631.3 1625.6,623.2 1626.2,629.2 1626.8,634.1 1627.4,620.3 1628.0,652.6 1628.6,636.1 1629.2,632.9 1629.8,627.8 1630.4,612.0 1631.0,630.1 1631.6,637.4 1632.2,638.6 1632.8,637.9 1633.4,642.9 1634.0,630.2 1634.6,629.0 1635.2,625.5 1635.8,640.7 1636.4,630.9 1637.0,650.1 1637.6,634.8 1638.2,626.3 1638.8,642.7 1639.4,643.2 1640.0,633.4 1640.6,642.0 1641.2,604.1 1641.8,643.7 1642.4,643.3 1643.0,644.6 1643.6,616.1 1644.2,631.0 1644.8,632.2 1645.4,636.6 1646.0,620.2 1646.6,639.6 1647.2,627.3 1647.8,611.2 1648.4,635.3 1649.0,630.4 1649.6,625.3 1650.2,637.5 1650.8,602.3 1651.4,627.3 1652.0,640.6 1652.6,631.7 1653.2,639.6 1653.8,631.8 1654.4,643.2 1655.0,626.2 1655.6,630.4 1656.2,620.6 1656.8,643.3 1657.4,632.4 1658.0,641.3 1658.6,634.3 1659.2,648.4 1659.8,631.7 1660.4,630.5 1661.0,621.8 1661.6,629.8 1662.2,618.5 1662.8,646.6 1663.4,645.8 1664.0,625.5 1664.6,627.4 1665.2,621.5 1665.8,629.9 1666.4,640.2 1667.0,624.6 1667.6,620.9 1668.2,647.9 1668.8,631.1 1669.4,637.5 1670.0,629.9 1670.6,635.0 1671.2,634.4 1671.8,634.7 1672.4,626.8 1673.0,644.3 1673.6,637.8 1674.2,641.2 1674.8,637.1 1675.4,645.7 1676.0,634.7 1676.6,634.3 1677.2,633.0 1677.8,636.5 1678.4,630.1 1679.0,630.4 1679.6,633.1 1680.2,618.4 1680.8,638.1 1681.4,620.1 1682.0,646.6 1682.6,641.2 1683.2,639.1 1683.8,621.3 1684.4,633.9 1685.0,630.5 1685.6,622.4 1686.2,638.4 1686.8,626.9 1687.4,628.5 1688.0,623.3 1688.6,632.8 1689.2,645.8 1689.8,645.6 1690.4,604.8 1691.0,643.8 1691.6,633.4 1692.2,631.3 1692.8,636.8 1693.4,616.0 1694.0,638.6 1694.6,621.2 1695.2,617.0 1695.8,639.5 1696.4,642.0 1697.0,612.9 1697.6,632.9 1698.2,647.3 1698.8,632.9 1699.4,651.5 1700.0,645.1 1700.6,628.0 1701.2,636.4 1701.8,643.3 1702.4,634.3 1703.0,621.4 1703.6,650.3 1704.2,619.4 1704.8,637.4 1705.4,619.3 1706.0,620.4 1706.6,632.5 1707.2,630.5 1707.8,629.4 1708.4,631.4 1709.0,634.2 1709.6,649.5 1710.2,632.2 1710.8,642.5 1711.4,641.0 1712.0,649.1 1712.6,628.5 1713.2,633.0 1713.8,637.3 1714.4,619.9 1715.0,644.2 1715.6,641.5 1716.2,619.2 1716.8,636.2 1717.4,619.4 1718.0,606.9 1718.6,640.4 1719.2,638.9 1719.8,632.6 1720.4,622.8 1721.0,628.8 1721.6,628.2 1722.2,630.4 1722.8,627.9 1723.4,615.5 1724.0,631.0 1724.6,599.6 1725.2,640.4 1725.8,622.9 1726.4,628.6 1727.0,632.1 1727.6,629.9 1728.2,643.4 1728.8,628.1 1729.4,643.4 1730.0,640.8 1730.6,640.1 1731.2,650.5 1731.8,627.8 1732.4,643.4 1733.0,641.2 1733.6,634.6 1734.2,636.8 1734.8,613.0 1735.4,636.1 1736.0,635.6 1736.6,636.2 1737.2,640.8 1737.8,622.9 1738.4,627.9 1739.0,644.2 1739.6,641.7 1740.2,633.1 1740.8,628.2 1741.4,639.7 1742.0,626.4 1742.6,637.4 1743.2,624.7 1743.8,624.0 1744.4,635.2 1745.0,629.1 1745.6,639.7 1746.2,630.5 1746.8,641.4 1747.4,618.9 1748.0,637.8 1748.6,639.7 1749.2,652.6 1749.8,634.7 1750.4,640.5 1751.0,624.4 1751.6,624.7 1752.2,631.5 1752.8,628.5 1753.4,632.6 1754.0,621.6 1754.6,625.1 1755.2,627.0 1755.8,624.3 1756.4,620.4 1757.0,634.7 1757.6,633.0 1758.2,640.7 1758.8,629.5 1759.4,632.2 1760.0,627.1 1760.6,633.8 1761.2,636.1 1761.8,648.0 1762.4,642.6 1763.0,613.8 1763.6,625.6 1764.2,633.2 1764.8,624.8 1765.4,636.9 1766.0,640.6 1766.6,638.4 1767.2,645.4 1767.8,646.8 1768.4,633.6 1769.0,633.4 1769.6,627.1 1770.2,634.1 1770.8,640.1 1771.4,644.0 1772.0,629.1 1772.6,615.8 1773.2,638.2 1773.8,647.6 1774.4,631.3 1775.0,643.8 1775.6,638.0 1776.2,635.4 1776.8,644.5 1777.4,632.7 1778.0,645.1 1778.6,638.6 1779.2,636.1 1779.8,624.9 1780.4,628.1 1781.0,627.4 1781.6,601.9 1782.2,622.6 1782.8,627.7 1783.4,633.0 1784.0,631.4 1784.6,636.2 1785.2,635.6 1785.8,635.6 1786.4,627.1 1787.0,640.0 1787.6,639.1 1788.2,633.9 1788.8,644.8 1789.4,632.8 1790.0,636.3 1790.6,636.0 1791.2,640.6 1791.8,623.0 1792.4,643.9 1793.0,642.7 1793.6,637.7 1794.2,647.2 1794.8,636.5 1795.4,636.4 1796.0,644.7 1796.6,633.8 1797.2,654.1 1797.8,630.3 1798.4,626.8 1799.0,634.7 1799.6,621.6 1800.2,626.9 1800.8,630.2 1801.4,650.7 1802.0,644.2 1802.6,643.1 1803.2,632.8 1803.8,637.1 1804.4,620.8 1805.0,639.1 1805.6,646.7 1806.2,636.8 1806.8,639.4 1807.4,656.3 1808.0,616.6 1808.6,643.5 1809.2,636.8 1809.8,634.3 1810.4,635.5 1811.0,627.3 1811.6,639.8 1812.2,643.9 1812.8,637.4 1813.4,617.6 1814.0,629.9 1814.6,628.4 1815.2,638.3 1815.8,629.2 1816.4,638.5 1817.0,633.8 1817.6,625.1 1818.2,622.6 1818.8,633.3 1819.4,644.9 1820.0,631.9 1820.6,635.2 1821.2,627.7 1821.8,634.2 1822.4,621.8 1823.0,649.8 1823.6,618.7 1824.2,644.4 1824.8,625.6 1825.4,636.7 1826.0,641.3 1826.6,632.2 1827.2,639.6 1827.8,620.5 1828.4,629.3 1829.0,630.5 1829.6,646.9 1830.2,636.2 1830.8,626.6 1831.4,630.7 1832.0,621.6 1832.6,633.5 1833.2,638.2 1833.8,625.2 1834.4,614.9 1835.0,634.0 1835.6,615.1 1836.2,621.3 1836.8,635.7 1837.4,636.7 1838.0,639.2 1838.6,620.5 1839.2,630.5 1839.8,625.9 1840.4,649.2 1841.0,633.6 1841.6,627.8 1842.2,641.6 1842.8,626.9 1843.4,635.2 1844.0,608.4 1844.6,639.8" fill="none" stroke="#f0f0f0" stroke-width="1.05"/>
<line x1="1473.4" y1="526" x2="1473.4" y2="560" stroke="#f0f0f0" stroke-width="1.1"/>
<line x1="1484" y1="536" x2="1484" y2="560" stroke="#f0f0f0" stroke-width="1.8"/>
<line x1="1504.6" y1="540" x2="1504.6" y2="585" stroke="#e0e0e0" stroke-width="1.5"/>
<circle cx="1473.4" cy="526.1" r="5.8" fill="#e01818"/>
<circle cx="1484" cy="536.2" r="5.8" fill="#f0e000"/>
<circle cx="1504.6" cy="540" r="5.8" fill="#1898d8"/>
</svg><div class="t" style="position:absolute;left:1308.42px;top:513.26px;font-size:17.5px;line-height:17.5px;color:#fff;white-space:pre;transform:scaleX(1.1789);transform-origin:0 0;">-10.0</div><div class="t" style="position:absolute;left:1308.42px;top:543.26px;font-size:17.5px;line-height:17.5px;color:#fff;white-space:pre;transform:scaleX(1.1789);transform-origin:0 0;">-20.0</div><div class="t" style="position:absolute;left:1308.42px;top:574.26px;font-size:17.5px;line-height:17.5px;color:#fff;white-space:pre;transform:scaleX(1.1789);transform-origin:0 0;">-30.0</div><div class="t" style="position:absolute;left:1308.42px;top:604.26px;font-size:17.5px;line-height:17.5px;color:#fff;white-space:pre;transform:scaleX(1.1789);transform-origin:0 0;">-40.0</div><div class="t" style="position:absolute;left:1308.42px;top:634.26px;font-size:17.5px;line-height:17.5px;color:#fff;white-space:pre;transform:scaleX(1.1789);transform-origin:0 0;">-50.0</div><div class="t" style="position:absolute;left:1308.42px;top:665.26px;font-size:17.5px;line-height:17.5px;color:#fff;white-space:pre;transform:scaleX(1.1789);transform-origin:0 0;">-60.0</div><div class="t" style="position:absolute;left:1375.50px;top:676.01px;font-size:15px;line-height:15px;color:#fff;white-space:pre;">-60</div><div class="t" style="position:absolute;left:1439.98px;top:676.01px;font-size:15px;line-height:15px;color:#fff;white-space:pre;">-20</div><div class="t" style="position:absolute;left:1506.96px;top:676.01px;font-size:15px;line-height:15px;color:#fff;white-space:pre;">20</div><div class="t" style="position:absolute;left:1571.44px;top:676.01px;font-size:15px;line-height:15px;color:#fff;white-space:pre;">60</div><div class="t" style="position:absolute;left:1631.42px;top:676.01px;font-size:15px;line-height:15px;color:#fff;white-space:pre;">100</div><div class="t" style="position:absolute;left:1695.90px;top:676.01px;font-size:15px;line-height:15px;color:#fff;white-space:pre;">140</div><div class="t" style="position:absolute;left:1760.38px;top:676.01px;font-size:15px;line-height:15px;color:#fff;white-space:pre;">180</div><div class="t" style="position:absolute;left:1824.86px;top:676.01px;font-size:15px;line-height:15px;color:#fff;white-space:pre;">220</div><div class="t" style="position:absolute;left:1408.30px;top:697.01px;font-size:15px;line-height:15px;color:#fff;white-space:pre;">-40</div><div class="t" style="position:absolute;left:1479.78px;top:697.01px;font-size:15px;line-height:15px;color:#fff;white-space:pre;">0</div><div class="t" style="position:absolute;left:1540.26px;top:697.01px;font-size:15px;line-height:15px;color:#fff;white-space:pre;">40</div><div class="t" style="position:absolute;left:1604.24px;top:697.01px;font-size:15px;line-height:15px;color:#fff;white-space:pre;">80</div><div class="t" style="position:absolute;left:1664.22px;top:697.01px;font-size:15px;line-height:15px;color:#fff;white-space:pre;">120</div><div class="t" style="position:absolute;left:1728.70px;top:697.01px;font-size:15px;line-height:15px;color:#fff;white-space:pre;">160</div><div class="t" style="position:absolute;left:1793.18px;top:697.01px;font-size:15px;line-height:15px;color:#fff;white-space:pre;">200</div><div class="t" style="position:absolute;left:1494.04px;top:719.66px;font-size:21.7px;line-height:21.7px;color:#fff;white-space:pre;transform:scaleX(0.9311);transform-origin:0 0;">Distance Difference (km)</div><div class="t" style="position:absolute;left:1210.50px;top:585.64px;font-size:19.6px;line-height:19.6px;color:#fff;white-space:pre;transform-origin:67.00px 9.66px;transform:rotate(-90deg) scaleX(1.0136);">Magnitude (dB)</div><div style="position:absolute;left:993px;top:753px;width:870px;height:7px;background:#888;"></div><div style="position:absolute;left:993px;top:760px;width:870px;height:30px;background:#0f2d50;"></div><div class="t" style="position:absolute;left:1391.30px;top:763.26px;font-size:22.5px;line-height:22.5px;color:#fff;white-space:pre;transform:scaleX(0.9357);transform-origin:0 0;">TII Carriers</div><svg style="left:0;top:0" width="1" height="1"><polygon points="1842.2,766.9 1860.4,766.9 1851.4,782.5" fill="none" stroke="#c8d4e4" stroke-width="1.3"/></svg><div style="position:absolute;left:993px;top:790px;width:870px;height:197px;background:#000;"></div><svg style="left:0;top:0" width="1" height="1">
<defs><linearGradient id="yg" x1="0" y1="810" x2="0" y2="978" gradientUnits="userSpaceOnUse"><stop offset="0" stop-color="#f4f4f0"/><stop offset="0.15" stop-color="#e8e860"/><stop offset="1" stop-color="#c0e060"/></linearGradient></defs>
<line x1="1152.3" y1="810.6" x2="1152.3" y2="978.1" stroke="#a0a0a0" stroke-opacity="0.8" stroke-width="1.2"/><line x1="1223.8" y1="810.6" x2="1223.8" y2="978.1" stroke="#a0a0a0" stroke-opacity="0.8" stroke-width="1.2"/><line x1="1295.3" y1="810.6" x2="1295.3" y2="978.1" stroke="#a0a0a0" stroke-opacity="0.8" stroke-width="1.2"/><line x1="1366.8" y1="810.6" x2="1366.8" y2="978.1" stroke="#a0a0a0" stroke-opacity="0.8" stroke-width="1.2"/><line x1="1438.3" y1="810.6" x2="1438.3" y2="978.1" stroke="#a0a0a0" stroke-opacity="0.8" stroke-width="1.2"/><line x1="1509.8" y1="810.6" x2="1509.8" y2="978.1" stroke="#a0a0a0" stroke-opacity="0.8" stroke-width="1.2"/><line x1="1581.3" y1="810.6" x2="1581.3" y2="978.1" stroke="#a0a0a0" stroke-opacity="0.8" stroke-width="1.2"/><line x1="1652.8" y1="810.6" x2="1652.8" y2="978.1" stroke="#a0a0a0" stroke-opacity="0.8" stroke-width="1.2"/><line x1="1724.3" y1="810.6" x2="1724.3" y2="978.1" stroke="#a0a0a0" stroke-opacity="0.8" stroke-width="1.2"/><line x1="1795.8" y1="810.6" x2="1795.8" y2="978.1" stroke="#a0a0a0" stroke-opacity="0.8" stroke-width="1.2"/><line x1="1107.4" y1="844.1" x2="1837.9" y2="844.1" stroke="#a0a0a0" stroke-opacity="0.8" stroke-width="1.2"/><line x1="1107.4" y1="877.6" x2="1837.9" y2="877.6" stroke="#a0a0a0" stroke-opacity="0.8" stroke-width="1.2"/><line x1="1107.4" y1="911.1" x2="1837.9" y2="911.1" stroke="#a0a0a0" stroke-opacity="0.8" stroke-width="1.2"/><line x1="1107.4" y1="944.6" x2="1837.9" y2="944.6" stroke="#a0a0a0" stroke-opacity="0.8" stroke-width="1.2"/>
<rect x="1107.4" y="810.6" width="730.5" height="167.5" fill="none" stroke="#9a9a9a" stroke-width="1.5"/>
<line x1="1107.4" y1="976" x2="1837.9" y2="976" stroke="#777" stroke-width="1.5"/>
<line x1="1199.4" y1="813" x2="1199.4" y2="978" stroke="#e8e020" stroke-width="2" stroke-dasharray="2,2"/><line x1="1336.3" y1="813" x2="1336.3" y2="978" stroke="#e8e020" stroke-width="2" stroke-dasharray="2,2"/><line x1="1473.2" y1="813" x2="1473.2" y2="978" stroke="#e8e020" stroke-width="2" stroke-dasharray="2,2"/><line x1="1610.1" y1="813" x2="1610.1" y2="978" stroke="#e8e020" stroke-width="2" stroke-dasharray="2,2"/><line x1="1747" y1="813" x2="1747" y2="978" stroke="#e8e020" stroke-width="2" stroke-dasharray="2,2"/>
<rect x="1217.3" y="832.8" width="2" height="145.30000000000007" fill="url(#yg)"/><rect x="1219.2" y="814.3" width="2" height="163.80000000000007" fill="#90dc6c"/><rect x="1251.2" y="839.3" width="2" height="138.80000000000007" fill="url(#yg)"/><rect x="1253.3" y="812.4" width="2" height="165.70000000000005" fill="#90dc6c"/><rect x="1268" y="834.7" width="2" height="143.39999999999998" fill="url(#yg)"/><rect x="1270.1" y="826.3" width="2" height="151.80000000000007" fill="#90dc6c"/><rect x="1319.6" y="838.8" width="2" height="139.30000000000007" fill="url(#yg)"/><rect x="1321.3" y="837.1" width="2" height="141.0" fill="#90dc6c"/><rect x="1353.7" y="828" width="2" height="150.10000000000002" fill="url(#yg)"/><rect x="1356.1" y="847.2" width="2" height="130.89999999999998" fill="#90dc6c"/><rect x="1388" y="825.6" width="2" height="152.5" fill="url(#yg)"/><rect x="1389.7" y="854.4" width="2" height="123.70000000000005" fill="#90dc6c"/><rect x="1405" y="829" width="2" height="149.10000000000002" fill="url(#yg)"/><rect x="1407.5" y="863" width="2" height="115.10000000000002" fill="#90dc6c"/><rect x="1456.7" y="820.3" width="2" height="157.80000000000007" fill="url(#yg)"/><rect x="1458.6" y="861.3" width="2" height="116.80000000000007" fill="#90dc6c"/><rect x="1491" y="825.3" width="2" height="152.80000000000007" fill="url(#yg)"/><rect x="1493.4" y="864.3" width="2" height="113.80000000000007" fill="#90dc6c"/><rect x="1525.2" y="828.3" width="2" height="149.80000000000007" fill="url(#yg)"/><rect x="1527.7" y="868" width="2" height="110.10000000000002" fill="#90dc6c"/><rect x="1542.4" y="829" width="2" height="149.10000000000002" fill="url(#yg)"/><rect x="1544.9" y="861.3" width="2" height="116.80000000000007" fill="#90dc6c"/><rect x="1593.6" y="830.8" width="2" height="147.30000000000007" fill="url(#yg)"/><rect x="1596" y="861.8" width="2" height="116.30000000000007" fill="#90dc6c"/><rect x="1627.9" y="851.4" width="2" height="126.70000000000005" fill="url(#yg)"/><rect x="1630.4" y="869.3" width="2" height="108.80000000000007" fill="#90dc6c"/><rect x="1662.4" y="845.2" width="2" height="132.89999999999998" fill="url(#yg)"/><rect x="1664.9" y="873" width="2" height="105.10000000000002" fill="#90dc6c"/><rect x="1679.8" y="848.2" width="2" height="129.89999999999998" fill="url(#yg)"/><rect x="1682.3" y="860" width="2" height="118.10000000000002" fill="#90dc6c"/><rect x="1730.8" y="838.2" width="2" height="139.89999999999998" fill="url(#yg)"/><rect x="1733.2" y="873.5" width="2" height="104.60000000000002" fill="#90dc6c"/>
</svg><div class="t" style="position:absolute;left:1066.82px;top:802.01px;font-size:19px;line-height:19px;color:#fff;white-space:pre;transform:scaleX(1.0760);transform-origin:0 0;">1.0</div><div class="t" style="position:absolute;left:1066.82px;top:836.01px;font-size:19px;line-height:19px;color:#fff;white-space:pre;transform:scaleX(1.0760);transform-origin:0 0;">0.8</div><div class="t" style="position:absolute;left:1066.82px;top:870.01px;font-size:19px;line-height:19px;color:#fff;white-space:pre;transform:scaleX(1.0760);transform-origin:0 0;">0.6</div><div class="t" style="position:absolute;left:1066.82px;top:903.01px;font-size:19px;line-height:19px;color:#fff;white-space:pre;transform:scaleX(1.0760);transform-origin:0 0;">0.4</div><div class="t" style="position:absolute;left:1066.82px;top:936.01px;font-size:19px;line-height:19px;color:#fff;white-space:pre;transform:scaleX(1.0760);transform-origin:0 0;">0.2</div><div class="t" style="position:absolute;left:1066.82px;top:970.01px;font-size:19px;line-height:19px;color:#fff;white-space:pre;transform:scaleX(1.0760);transform-origin:0 0;">0.0</div><div class="t" style="position:absolute;left:994.00px;top:884.89px;font-size:19.5px;line-height:19.5px;color:#fff;white-space:pre;transform-origin:45.50px 9.61px;transform:rotate(-90deg) scaleX(1.0247);">Magnitude</div>
</body></html>
